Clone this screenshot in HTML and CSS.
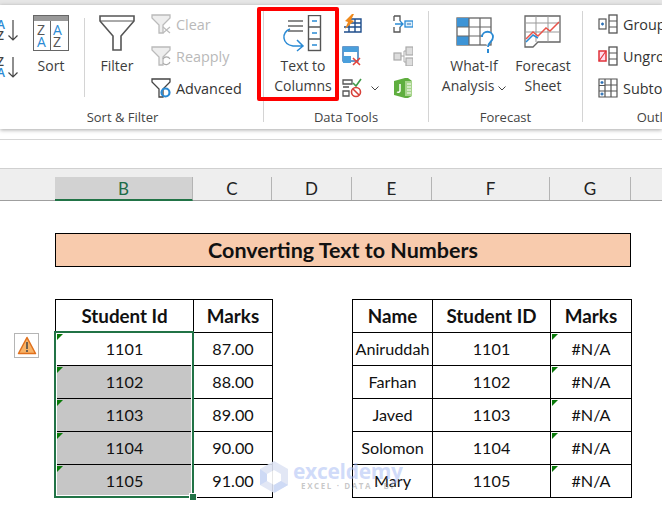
FILE: index.html
```html
<!DOCTYPE html>
<html lang="en">
<head>
<meta charset="utf-8">
<title>Converting Text to Numbers</title>
<link rel="stylesheet" href="styles.css">
</head>
<body>
<div class="app">
  <div class="top-strip"></div>
  <section class="ribbon">
    <div class="group g-sort">
      <div class="group-body">
        <div class="az-col">
          <svg class="ico-az" viewBox="0 0 18 24"><text x="-3" y="10" class="l-blue">A</text><text x="-3" y="21" class="l-dark">Z</text><path d="M13 1v20M8.500 16.500l4.500 4.500 4.500-4.500" class="st-dark"/></svg>
          <svg class="ico-az" viewBox="0 0 18 24"><text x="-3" y="10" class="l-dark">Z</text><text x="-3" y="21" class="l-blue">A</text><path d="M13 1v20M8.500 16.500l4.500 4.500 4.500-4.500" class="st-dark"/></svg>
        </div>
        <div class="big b-sort">
          <div class="big-icon">
            <svg width="36" height="36" viewBox="0 0 36 36"><rect x=".5" y=".5" width="35" height="35" fill="#fff" stroke="#666"/><rect x="1" y="1" width="34" height="5" fill="#999"/><path d="M17.500 6v29" stroke="#666"/><text x="4" y="20" class="l-sort dark">Z</text><text x="4" y="32" class="l-sort blue">A</text><text x="20" y="20" class="l-sort blue">A</text><text x="20" y="32" class="l-sort dark">Z</text></svg>
          </div>
          <span class="lbl">Sort</span>
        </div>
        <div class="inner-sep"></div>
        <div class="big b-filter">
          <div class="big-icon">
            <svg width="36" height="36" viewBox="0 0 36 36"><path d="M1 1h34v5L22 21v14h-8V21L1 6z" fill="#fff" stroke="#555" stroke-width="1.600"/><path d="M1 6h34" stroke="#555" stroke-width="1"/></svg>
          </div>
          <span class="lbl">Filter</span>
        </div>
        <div class="small-col">
          <div class="small off"><svg width="20" height="20" viewBox="0 0 20 20"><path d="M1 1h18v3l-7 7v8H8v-8L1 4z" fill="#eee" stroke="#bbb" stroke-width="1.300"/><path d="M12 13l7 6M19 13l-7 6" stroke="#bbb" stroke-width="1.200"/></svg><span>Clear</span></div>
          <div class="small off"><svg width="20" height="20" viewBox="0 0 20 20"><path d="M1 1h18v3l-7 7v8H8v-8L1 4z" fill="#eee" stroke="#bbb" stroke-width="1.300"/><path d="M12 13a4 4 0 0 1 7 0M19 16a4 4 0 0 1-7 1" fill="none" stroke="#aaa" stroke-width="1.200"/></svg><span>Reapply</span></div>
          <div class="small"><svg width="20" height="20" viewBox="0 0 20 20"><path d="M1 1h18v3l-7 7v8H8v-8L1 4z" fill="#fff" stroke="#444" stroke-width="1.300"/><circle cx="14.500" cy="14.500" r="4" fill="none" stroke="#2a8ad4" stroke-width="2.200"/></svg><span>Advanced</span></div>
        </div>
      </div>
      <div class="group-name name-sort">Sort &amp; Filter</div>
    </div>
    <div class="sep"></div>
    <div class="group g-data">
      <div class="group-body">
        <div class="big b-ttc">
          <div class="big-icon">
            <svg width="42" height="38" viewBox="0 0 42 38"><path d="M6 6h15M6 11h15M6 16h15" stroke="#666" stroke-width="1.400"/><rect x="26.500" y=".5" width="12" height="35" fill="#fff" stroke="#555" stroke-width="1.400"/><path d="M26 12h13M26 24h13" stroke="#555" stroke-width="1.400"/><path d="M30 6h5M30 18h5M30 30h5" stroke="#2a8ad4" stroke-width="1.400"/><path d="M8 16c-9 4-8 15 3 17h9M15 27l6 6-6 5" transform="translate(0 -2)" fill="none" stroke="#2a8ad4" stroke-width="1.500"/></svg>
          </div>
          <span class="lbl">Text to</span>
          <span class="lbl">Columns</span>
        </div>
        <div class="small-col icons-a">
          <div class="small"><svg width="20" height="20" viewBox="0 0 20 20"><path d="M2 18h17V5H6M13 5v13M8 9h11M2 13h17M7 9v9" fill="none" stroke="#1f4e8c" stroke-width="1.400"/><path d="M10 0L3 7l3 1-3 7 9-8-3-1 3-6z" fill="#f08a1d"/></svg></div>
          <div class="small"><svg width="20" height="20" viewBox="0 0 20 20"><rect x="1" y="1" width="15" height="14" fill="#fff" stroke="#2a6fb5" stroke-width="1.400"/><rect x="1" y="1" width="15" height="5" fill="#4a9fdc"/><rect x="1" y="10" width="8" height="7" fill="#4a9fdc"/><path d="M11 12l7 7M18 12l-7 7" stroke="#e2433c" stroke-width="1.600"/></svg></div>
          <div class="small"><svg width="20" height="20" viewBox="0 0 20 20"><path d="M1 2h9v4H1zM1 9h6M1 13h6v5H1z" fill="none" stroke="#555" stroke-width="1.300"/><path d="M11 5l3 3 5-7" fill="none" stroke="#3f9a48" stroke-width="1.600"/><circle cx="14" cy="14" r="4.500" fill="#fff" stroke="#d8413a" stroke-width="1.600"/><path d="M11 11l6 6" stroke="#d8413a" stroke-width="1.600"/></svg><svg class="chev" width="8" height="5" viewBox="0 0 8 5"><path d="M.5.5L4 4 7.500.5" fill="none" stroke="#444"/></svg></div>
        </div>
        <div class="small-col icons-b">
          <div class="small"><svg width="20" height="20" viewBox="0 0 20 20"><path d="M1 2h6v5M7 13v5H1v-5M1 2v5M1 13v5" fill="none" stroke="#555" stroke-width="1.300"/><rect x="12" y="7" width="8" height="6" fill="#dff0fb" stroke="#2a8ad4" stroke-width="1.300"/><path d="M14 10h4" stroke="#2a6fb5"/><path d="M2 10h8M7 7l3 3-3 3" fill="none" stroke="#2a8ad4" stroke-width="1.300"/></svg></div>
          <div class="small"><svg width="20" height="20" viewBox="0 0 20 20"><rect x="1" y="7" width="7" height="7" fill="#ddd" stroke="#aaa" stroke-width="1.200"/><rect x="13" y="1" width="7" height="8" fill="#ddd" stroke="#aaa" stroke-width="1.200"/><rect x="13" y="12" width="7" height="8" fill="#ddd" stroke="#aaa" stroke-width="1.200"/><path d="M8 10h3v-5h2M11 10v6h2" fill="none" stroke="#aaa"/></svg></div>
          <div class="small"><svg width="20" height="20" viewBox="0 0 20 20"><path d="M1 3l11-3h3l4 3v15l-4 2H12L1 17z" fill="#5fae3f"/><path d="M12 3h7v15h-7z" fill="#a7d48c"/><path d="M14 6h4M14 9h4M14 12h4M14 15h4" stroke="#fff"/><path d="M7 6v7a2 2 0 0 1-3 1" fill="none" stroke="#fff" stroke-width="1.500"/></svg></div>
        </div>
      </div>
      <div class="group-name">Data Tools</div>
    </div>
    <div class="sep"></div>
    <div class="group g-forecast">
      <div class="group-body">
        <div class="big b-whatif">
          <div class="big-icon">
            <svg class="ico-whatif" width="40" height="38" viewBox="0 0 40 38"><rect x="1" y="1" width="34" height="27" fill="#fff" stroke="#666" stroke-width="1.300"/><rect x="1" y="1" width="12" height="9" fill="#3d94d6"/><rect x="1" y="19" width="12" height="9" fill="#3d94d6"/><path d="M13 1v27M24 1v27M1 10h34M1 19h34" stroke="#666" stroke-width="1.200"/><path d="M26 20c0-7 11-7 11 0 0 5-5 5-5 10" fill="#fff" stroke="#2a8ad4" stroke-width="1.800"/><path d="M32 32v4" stroke="#2a8ad4" stroke-width="2"/></svg>
          </div>
          <span class="lbl">What-If</span>
          <span class="lbl">Analysis <svg width="8" height="5" viewBox="0 0 8 5"><path d="M.5.5L4 4 7.500.5" fill="none" stroke="#444"/></svg></span>
        </div>
        <div class="big b-sheet">
          <div class="big-icon">
            <svg width="38" height="34" viewBox="0 0 38 34"><path d="M1 1h35v26H14l-5 5H1z" fill="#fff" stroke="#666" stroke-width="1.300"/><path d="M1 8h35M1 17h35M12 1v26M24 1v26" stroke="#999"/><path d="M2 24l7-7 5 4 8-8 4 3 9-9" fill="none" stroke="#e8534a" stroke-width="1.500"/><path d="M2 27l7-7 5 3" fill="none" stroke="#2a8ad4" stroke-width="1.500"/></svg>
          </div>
          <span class="lbl">Forecast</span>
          <span class="lbl">Sheet</span>
        </div>
      </div>
      <div class="group-name">Forecast</div>
    </div>
    <div class="sep"></div>
    <div class="group g-outline">
      <div class="group-body">
        <div class="small-col">
          <div class="small"><svg width="20" height="20" viewBox="0 0 20 20"><rect x="1" y="5" width="7" height="10" fill="#fff" stroke="#555" stroke-width="1.200"/><path d="M3 10h3M4.500 8.500v3" stroke="#2a6fb5" stroke-width="1.300"/><rect x="11" y="1" width="8" height="18" fill="#fff" stroke="#555" stroke-width="1.300"/><path d="M11 7h8M11 13h8" stroke="#555"/></svg><span>Group</span></div>
          <div class="small"><svg width="20" height="20" viewBox="0 0 20 20"><rect x="1" y="5" width="7" height="10" fill="#fde" stroke="#e0323a" stroke-width="1.500"/><path d="M1 15l7-10" stroke="#e0323a" stroke-width="1.200"/><rect x="11" y="1" width="8" height="18" fill="#fff" stroke="#555" stroke-width="1.300"/><path d="M11 7h8M11 13h8" stroke="#555"/></svg><span>Ungroup</span></div>
          <div class="small"><svg width="20" height="20" viewBox="0 0 20 20"><path d="M1 1h18v18H1zM1 7.500h6M1 13h18M7 1v18M13 1v18M7 7h12" fill="#fff" stroke="#555" stroke-width="1.200"/><path d="M2.500 4.500h3M4 3v3M2.500 16h3M4 14.500v3" stroke="#2a6fb5" stroke-width="1.300"/></svg><span>Subtotal</span></div>
        </div>
      </div>
      <div class="group-name">Outline</div>
    </div>
    <div class="callout"></div>
  </section>
  <div class="formula-bar"></div>
  <div class="col-heads">
    <div class="ch corner"></div>
    <div class="ch w-b active">B</div>
    <div class="ch w-c">C</div>
    <div class="ch w-d">D</div>
    <div class="ch w-e">E</div>
    <div class="ch w-f">F</div>
    <div class="ch w-g">G</div>
    <div class="ch w-h"></div>
  </div>
  <main class="sheet">
    <h1 class="title">Converting Text to Numbers</h1>
    <div class="tables">
      <div class="warn">
        <svg width="20" height="19" viewBox="0 0 20 19"><path d="M10 1.500L18.500 17.500H1.500z" fill="#f7b267" stroke="#e0701c" stroke-width="1.500" stroke-linejoin="round"/><path d="M10 6v7" stroke="#444" stroke-width="1.500"/><path d="M10 14v2" stroke="#444" stroke-width="1.500"/></svg>
      </div>
      <div class="table-wrap">
        <table class="t1">
          <thead><tr><th class="w-b">Student Id</th><th class="w-c">Marks</th></tr></thead>
          <tbody>
            <tr><td class="flag">1101</td><td>87.00</td></tr>
            <tr><td class="flag sel">1102</td><td>88.00</td></tr>
            <tr><td class="flag sel">1103</td><td>89.00</td></tr>
            <tr><td class="flag sel">1104</td><td>90.00</td></tr>
            <tr><td class="flag sel">1105</td><td>91.00</td></tr>
          </tbody>
        </table>
        <div class="selection"><span class="handle"></span></div>
      </div>
      <table class="t2">
        <thead><tr><th class="w-e">Name</th><th class="w-f">Student ID</th><th class="w-g">Marks</th></tr></thead>
        <tbody>
          <tr><td>Aniruddah</td><td>1101</td><td class="flag">#N/A</td></tr>
          <tr><td>Farhan</td><td>1102</td><td class="flag">#N/A</td></tr>
          <tr><td>Javed</td><td>1103</td><td class="flag">#N/A</td></tr>
          <tr><td>Solomon</td><td>1104</td><td class="flag">#N/A</td></tr>
          <tr><td>Mary</td><td>1105</td><td class="flag">#N/A</td></tr>
        </tbody>
      </table>
    </div>
    <div class="watermark">
      <svg width="28" height="32" viewBox="0 0 28 32"><path d="M14 0l14 8v16l-14 8-14-8V8z" fill="#dfe5f5"/><path d="M14 9l7 4v7l-7 4-7-4v-7z" fill="#fff"/><path d="M0 8l7 5v7l-7 4zM14 24l7-4 7 4-14 8z" fill="#c9d6f5"/></svg>
      <div class="wm-text"><span class="wm-name">exceldemy</span><span class="wm-sub">EXCEL · DATA · BI</span></div>
    </div>
  </main>
</div>
</body>
</html>
```
FILE: styles.css
```css
* { box-sizing: border-box; }
html, body { margin: 0; height: 100%; }
body { overflow: hidden; background: #fff; }
.app { width: 662px; height: 508px; overflow: hidden; position: relative; display: flex; flex-direction: column; font-family: "Open Sans", sans-serif; color: #333; }
.top-strip { height: 5px; background: #e6e6e6; flex: none; }

/* Ribbon */
.ribbon { position: relative; z-index: 1; flex: none; height: 124px; background: #fff; display: flex; box-shadow: 0 1px 4px rgba(0,0,0,.35); }
.sep { flex: none; width: 1px; margin: 6px 0 7px; background: #d4d4d4; }
.group { flex: none; display: flex; flex-direction: column; padding-top: 3px; }
.g-sort { width: 263px; }
.g-data { width: 164px; }
.g-forecast { width: 153px; }
.g-outline { width: 152px; }
.group-body { height: 99px; display: flex; }
.group-name { height: 20px; line-height: 20px; text-align: center; font-size: 13px; color: #444; white-space: nowrap; }
.name-sort { padding-right: 18px; }
.az-col { width: 21px; flex: none; padding-top: 11px; display: flex; flex-direction: column; gap: 13px; }
.ico-az { display: block; width: 18px; height: 24px; overflow: hidden; }
.l-blue, .l-dark { font: 600 12px "Open Sans", sans-serif; }
.l-blue { fill: #2a8ad4; }
.l-dark { fill: #444; }
.st-dark { fill: none; stroke: #444; stroke-width: 1.200; }
.l-sort { font: 400 14px "Open Sans", sans-serif; }
.dark { fill: #555; }
.blue { fill: #2a8ad4; }
.big { flex: none; display: flex; flex-direction: column; align-items: center; padding-top: 7px; }
.big-icon { height: 41px; display: flex; align-items: flex-start; justify-content: center; }
.lbl { height: 20px; line-height: 20px; font-size: 14px; white-space: nowrap; color: #3c3c3c; }
.b-sort { width: 60px; }
.inner-sep { flex: none; width: 1px; margin: 10px 2px 10px 3px; background: #d4d4d4; }
.b-filter { width: 60px; }
.b-ttc { width: 78px; }
.b-whatif { width: 90px; }
.ico-whatif { margin-top: 2px; margin-left: 4px; }
.b-sheet { width: 48px; margin-right: 15px; }
.small-col { flex: none; display: flex; flex-direction: column; margin-left: 4px; }
.g-data .small-col { margin-left: 0; }
.small { height: 32px; display: flex; align-items: center; gap: 5px; font-size: 14.4px; white-space: nowrap; color: #333; }
.small svg { flex: none; }
.small.off { color: #b9b9b9; }
.chev { margin-left: 4px; }
.icons-a { width: 51px; }
.g-outline .small-col { margin-left: 15px; }
.callout { position: absolute; left: 257px; top: 2px; width: 82px; height: 94px; border: 4px solid #f00; border-radius: 2px; }

/* Formula bar & column headings */
.formula-bar { flex: none; height: 29px; margin-top: 10px; background: #fff; border-top: 1px solid #d6d6d6; }
.col-heads { flex: none; height: 33px; display: flex; background: #eee; border-top: 1px solid #d0d0d0; border-bottom: 1px solid #9f9f9f; padding-top: 8px; font: 400 17px "Lato", sans-serif; color: #222; }
.ch { flex: none; height: 23px; line-height: 23px; text-align: center; border-right: 1px solid #b4b4b4; }
.corner { width: 55px; border-right: 0; }
.w-b { width: 138px; }
.w-c { width: 79px; }
.w-d { width: 80px; }
.w-e { width: 80px; }
.w-f { width: 118px; }
.w-g { width: 81px; }
.w-h { width: 40px; border-right: 0; }
.active { height: 24px; background: #d2d2d2; color: #1c6b47; border-bottom: 2px solid #217346; }

/* Sheet */
.sheet { flex: 1; position: relative; padding: 32px 31px 0 55px; font: 400 16.2px "Lato", sans-serif; color: #111; }
.title { margin: 0; height: 34px; line-height: 32px; text-align: center; font-size: 21.5px; font-weight: 700; background: #f8cbad; border: 1px solid #000; }
.tables { display: flex; gap: 79px; margin-top: 32px; position: relative; }
.table-wrap { position: relative; }
table { border-collapse: collapse; table-layout: fixed; }
.t1 { width: 218px; }
.t2 { width: 279px; }
th, td { height: 33px; padding: 0 0 2px; border: 1px solid #000; text-align: center; white-space: nowrap; }
th { font-size: 18.8px; font-weight: 700; }
td { position: relative; }
.flag::before { content: ""; position: absolute; left: 1px; top: 1px; border-style: solid; border-width: 6px 6px 0 0; border-color: #0a7a0a transparent transparent transparent; }
.sel { background: #c6c6c6; }
.selection { position: absolute; left: -1px; top: 32px; width: 140px; height: 167px; border: 2px solid #217346; box-shadow: inset 0 0 0 1px #fff; pointer-events: none; }
.handle { position: absolute; right: -4px; bottom: -4px; width: 6px; height: 6px; background: #217346; border: 1px solid #217346; outline: 1px solid #fff; }
.warn { position: absolute; left: -41px; top: 34px; width: 25px; height: 25px; background: #fff; border: 1px solid #b5b5b5; display: flex; align-items: center; justify-content: center; }
.watermark { position: absolute; left: 260px; top: 260px; display: flex; align-items: center; gap: 5px; opacity: .9; pointer-events: none; }
.wm-text { display: flex; flex-direction: column; align-items: center; margin-top: -2px; }
.wm-name { font: 700 21px/20px "Open Sans", sans-serif; color: rgba(170,190,245,.6); letter-spacing: -.3px; }
.wm-sub { font: 700 8px/10px "Open Sans", sans-serif; color: rgba(120,120,120,.45); letter-spacing: 1.600px; }
```
